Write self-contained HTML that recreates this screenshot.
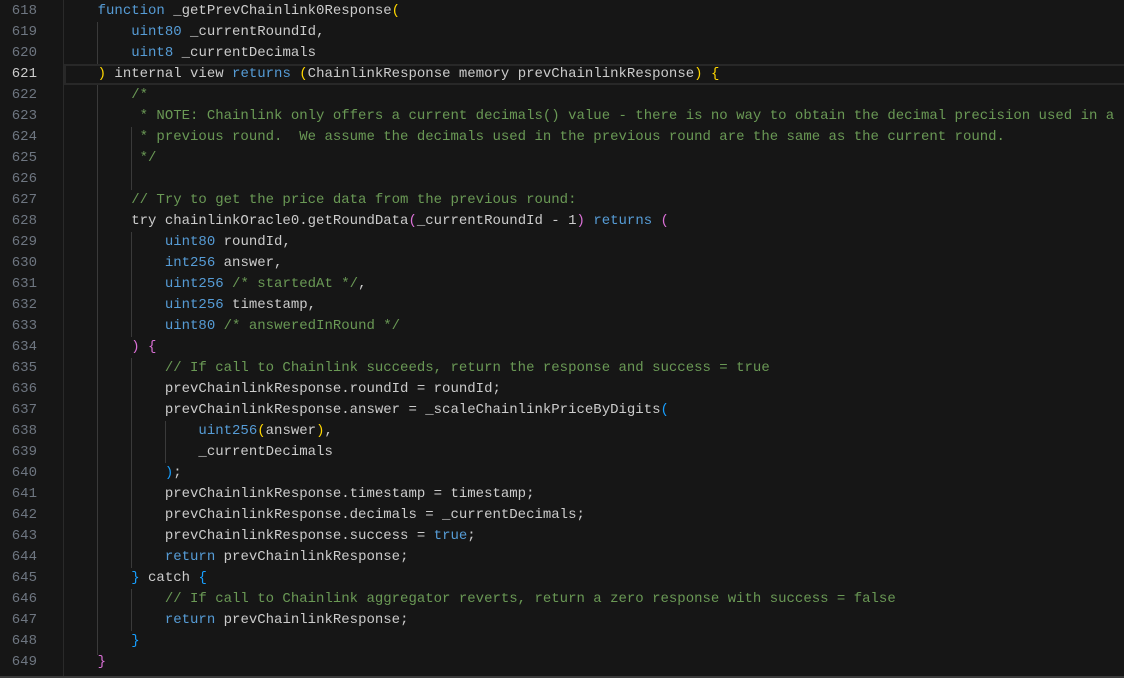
<!DOCTYPE html>
<html><head><style>
html,body{margin:0;padding:0;background:#161616;width:1124px;height:678px;overflow:hidden}
body{position:relative;font-family:"Liberation Mono",monospace;font-size:14px}
.ln{position:absolute;left:0;width:37px;text-align:right;color:#6e7681;height:21px;line-height:21px}
.ln.a{color:#cccccc}
.c{position:absolute;left:64px;white-space:pre;color:#cccccc;height:21px;line-height:21px}
.k{color:#569cd6}.g{color:#6a9955}.p{color:#da70d6}.b{color:#179fff}.y{color:#ffd700}
.gd{position:absolute;width:1px;background:#3a3a3a}
.sep{position:absolute;left:63px;top:0;width:1px;height:676px;background:#2a2a2a}
.hl{position:absolute;left:64px;right:0;top:64px;height:17px;border:2px solid #282828;border-right:none}
.bot{position:absolute;left:0;right:0;top:676px;height:2px;background:#3a3a3a}
</style></head><body>
<div class="sep"></div>
<div class="hl"></div>
<div class="gd" style="left:97px;top:22px;height:42px"></div>
<div class="gd" style="left:97px;top:85px;height:570px"></div>
<div class="gd" style="left:131px;top:169px;height:21px"></div>
<div class="gd" style="left:131px;top:127px;height:63px"></div>
<div class="gd" style="left:131px;top:232px;height:105px"></div>
<div class="gd" style="left:131px;top:358px;height:210px"></div>
<div class="gd" style="left:131px;top:589px;height:42px"></div>
<div class="gd" style="left:131px;top:589px;height:42px"></div>
<div class="gd" style="left:165px;top:421px;height:42px"></div>
<div id="L"></div>
<script>
var lines=[
['618','    <span class="k">function</span> _getPrevChainlink0Response<span class="y">(</span>'],
['619','        <span class="k">uint80</span> _currentRoundId,'],
['620','        <span class="k">uint8</span> _currentDecimals'],
['621','    <span class="y">)</span> internal view <span class="k">returns</span> <span class="y">(</span>ChainlinkResponse memory prevChainlinkResponse<span class="y">)</span> <span class="y">{</span>'],
['622','        <span class="g">/*</span>'],
['623','<span class="g">         * NOTE: Chainlink only offers a current decimals() value - there is no way to obtain the decimal precision used in a</span>'],
['624','<span class="g">         * previous round.  We assume the decimals used in the previous round are the same as the current round.</span>'],
['625','<span class="g">         */</span>'],
['626',''],
['627','<span class="g">        // Try to get the price data from the previous round:</span>'],
['628','        try chainlinkOracle0.getRoundData<span class="p">(</span>_currentRoundId - 1<span class="p">)</span> <span class="k">returns</span> <span class="p">(</span>'],
['629','            <span class="k">uint80</span> roundId,'],
['630','            <span class="k">int256</span> answer,'],
['631','            <span class="k">uint256</span> <span class="g">/* startedAt */</span>,'],
['632','            <span class="k">uint256</span> timestamp,'],
['633','            <span class="k">uint80</span> <span class="g">/* answeredInRound */</span>'],
['634','        <span class="p">)</span> <span class="p">{</span>'],
['635','<span class="g">            // If call to Chainlink succeeds, return the response and success = true</span>'],
['636','            prevChainlinkResponse.roundId = roundId;'],
['637','            prevChainlinkResponse.answer = _scaleChainlinkPriceByDigits<span class="b">(</span>'],
['638','                <span class="k">uint256</span><span class="y">(</span>answer<span class="y">)</span>,'],
['639','                _currentDecimals'],
['640','            <span class="b">)</span>;'],
['641','            prevChainlinkResponse.timestamp = timestamp;'],
['642','            prevChainlinkResponse.decimals = _currentDecimals;'],
['643','            prevChainlinkResponse.success = <span class="k">true</span>;'],
['644','            <span class="k">return</span> prevChainlinkResponse;'],
['645','        <span class="b">}</span> catch <span class="b">{</span>'],
['646','<span class="g">            // If call to Chainlink aggregator reverts, return a zero response with success = false</span>'],
['647','            <span class="k">return</span> prevChainlinkResponse;'],
['648','        <span class="b">}</span>'],
['649','    <span class="p">}</span>']
];
var h='';
lines.forEach(function(l,i){var t=1+i*21;
h+='<div class="ln'+(l[0]=='621'?' a':'')+'" style="top:'+t+'px">'+l[0]+'</div>';
h+='<div class="c" style="top:'+t+'px">'+l[1]+'</div>';});
document.getElementById('L').innerHTML=h;
</script>
<div class="bot"></div>
</body></html>
